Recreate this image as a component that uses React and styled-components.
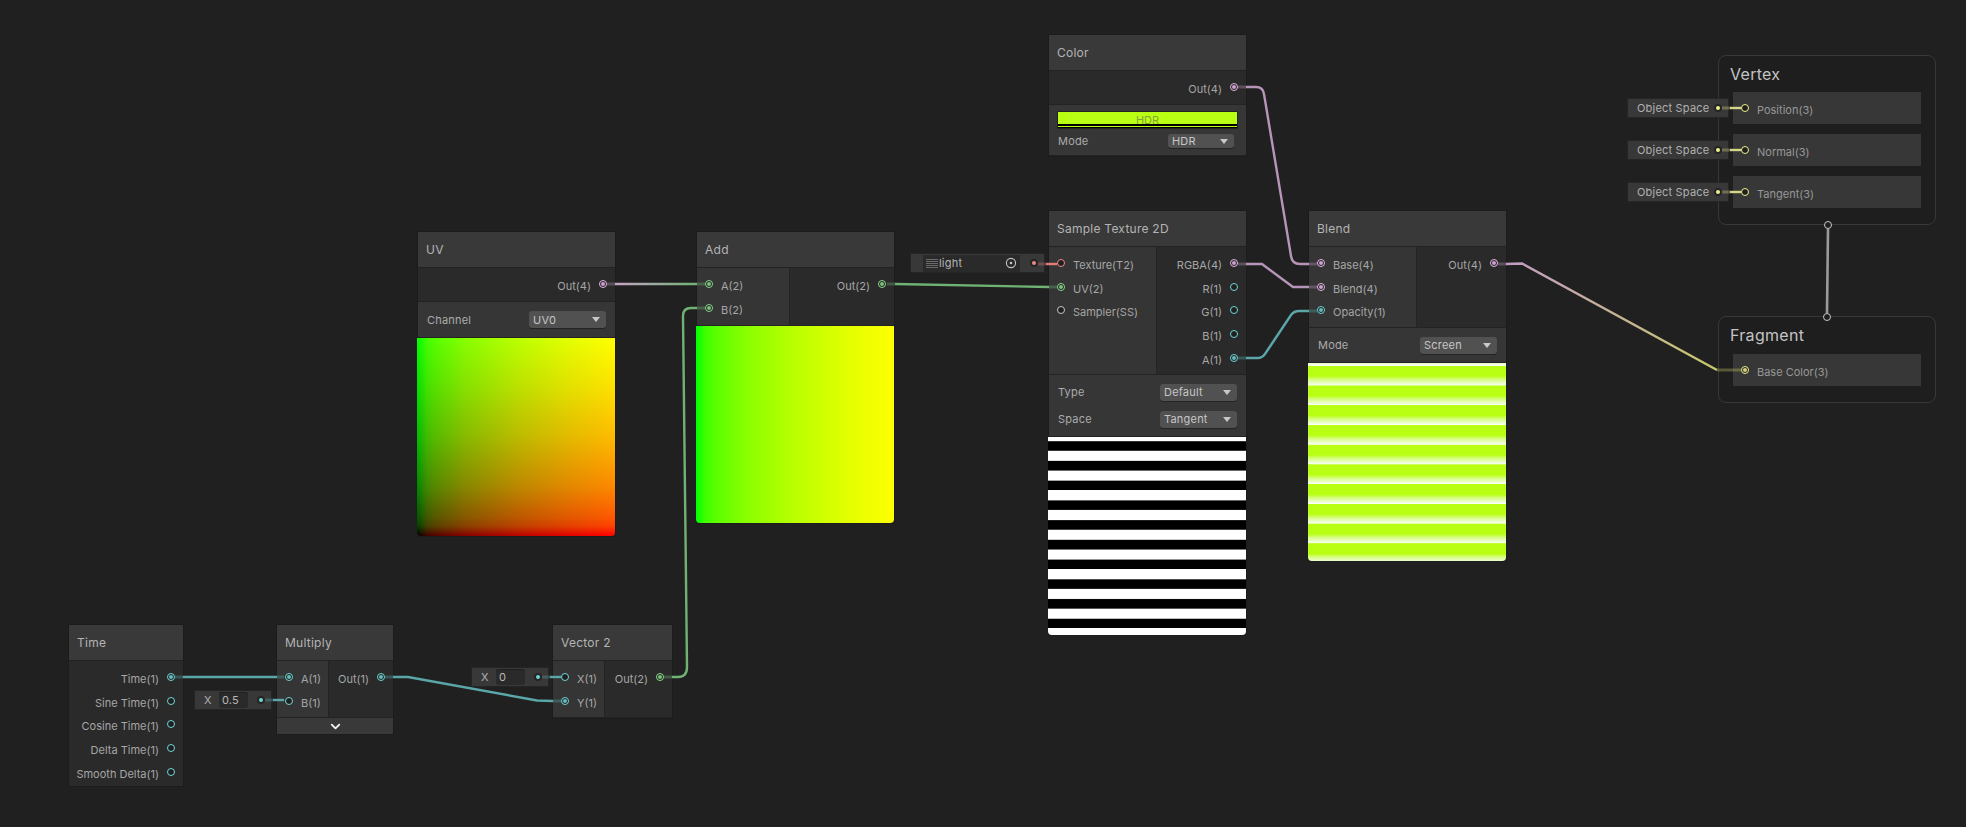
import React from 'react';
import styled, { createGlobalStyle } from 'styled-components';
import { ChevronDown } from 'lucide-react';

const PINK = '#eab9ea';
const GREEN = '#8fdc8f';
const TEAL = '#72d6d6';
const YELLOW = '#f2f28c';
const RED = '#f08585';
const GRAY = '#c8c8c8';

const GlobalStyle = createGlobalStyle`
  html, body {
    margin: 0;
    padding: 0;
    background: #202020;
  }
  body {
    font-family: Inter, "Liberation Sans", sans-serif;
    overflow: hidden;
  }
`;

const Canvas = styled.div`
  position: relative;
  width: 1966px;
  height: 827px;
  background: #202020;
  overflow: hidden;
`;

const Node = styled.div`
  position: absolute;
  left: ${(p) => p.$x}px;
  top: ${(p) => p.$y}px;
  width: ${(p) => p.$w}px;
  background: #2a2a2a;
  box-shadow: 0 0 0 1px #1c1c1c;
  display: flex;
  flex-direction: column;
`;

const Title = styled.div`
  height: 35px;
  line-height: 35px;
  padding-left: 8px;
  background: #393939;
  color: #b4b4b4;
  font-size: 12px;
  letter-spacing: 0.25px;
  border-bottom: 1px solid #232323;
`;

const Ports = styled.div`
  display: flex;
  height: ${(p) => p.$h}px;
  border-bottom: 1px solid #232323;
`;

const Inputs = styled.div`
  width: ${(p) => p.$w}px;
  flex: none;
  box-sizing: border-box;
  padding: 4px 0 0 8px;
  background: #353535;
  border-right: 1px solid #242424;
`;

const Outputs = styled.div`
  flex: 1;
  display: flex;
  flex-direction: column;
  align-items: flex-end;
  padding: 4px 8px 0 0;
`;

const PortRow = styled.div`
  display: flex;
  align-items: center;
  gap: 8px;
  height: 23.7px;
`;

const Label = styled.span`
  color: #a6a6a6;
  font-size: 11px;
  line-height: 14px;
  padding-top: 4px;
  white-space: nowrap;
`;

const Port = styled.span`
  position: relative;
  flex: none;
  box-sizing: border-box;
  width: 8px;
  height: 8px;
  border-radius: 50%;
  border: 1.3px solid ${(p) => p.$c};
  background: #1f1f1f;

  &::after {
    content: '';
    display: ${(p) => (p.$on ? 'block' : 'none')};
    position: absolute;
    inset: 1px;
    border-radius: 50%;
    background: ${(p) => p.$c};
    opacity: 0.85;
  }
`;

const Controls = styled.div`
  display: flex;
  flex-direction: column;
  justify-content: ${(p) => (p.$top ? 'flex-start' : 'center')};
  height: ${(p) => p.$h}px;
  box-sizing: border-box;
  padding: ${(p) => (p.$top ? '7px 9px 0' : '0 9px')};
  background: #363636;
  border-bottom: 1px solid #232323;
`;

const ControlRow = styled.div`
  display: flex;
  align-items: center;
  justify-content: space-between;
  height: ${(p) => p.$h || 27}px;
`;

const ControlLabel = styled.span`
  color: #ababab;
  font-size: 11px;
  letter-spacing: 0.2px;
`;

const Select = styled.div`
  box-sizing: border-box;
  width: ${(p) => p.$w || 77}px;
  height: ${(p) => p.$h || 17}px;
  padding: 0 4px;
  margin-right: ${(p) => p.$mr || 0}px;
  display: flex;
  align-items: center;
  justify-content: space-between;
  background: #515151;
  border-radius: 3px;
  box-shadow: 0 1px 0 #242424;
  color: #c6c6c6;
  font-size: 11px;
  letter-spacing: 0.2px;
`;

const Arrow = styled.i`
  width: 0;
  height: 0;
  margin-right: 2px;
  border-left: 4px solid transparent;
  border-right: 4px solid transparent;
  border-top: 5px solid #c8c8c8;
`;

const Swatch = styled.div`
  height: 16px;
  background: linear-gradient(to bottom, #b9ff14 0 12px, #000 12px 14.5px, #b9ff14 14.5px 15.5px, #000 15.5px);
  box-shadow: 0 0 0 0.5px #111;
  color: #86a33a;
  font-size: 11px;
  line-height: 16px;
  text-align: center;
  overflow: hidden;
`;

const Preview = styled.div`
  height: ${(p) => p.$h || 198}px;
  margin-left: -1px;
  border-radius: 0 0 4px 4px;
  background: ${(p) => p.$bg};
  background-blend-mode: ${(p) => p.$blend || 'normal'};
`;

const Expander = styled.div`
  height: 16px;
  display: flex;
  align-items: center;
  justify-content: center;
  background: #393939;
  color: #f0f0f0;
`;

const Block = styled.div`
  position: absolute;
  left: ${(p) => p.$x}px;
  top: ${(p) => p.$y}px;
  box-sizing: border-box;
  width: 218px;
  height: ${(p) => p.$h}px;
  padding: 0 14px;
  background: #1e1e1e;
  border: 1px solid #383838;
  border-radius: 8px;
  display: flex;
  flex-direction: column;
`;

const BlockTitle = styled.div`
  height: ${(p) => p.$h || 36}px;
  line-height: 36px;
  margin-left: -3px;
  color: #c4c4c4;
  font-size: 16px;
  letter-spacing: 0.3px;
`;

const BlockSlots = styled.div`
  display: flex;
  flex-direction: column;
  gap: 10.2px;
`;

const Slot = styled.div`
  height: 32px;
  display: flex;
  align-items: center;
  gap: 8px;
  padding-left: 8px;
  background: #373737;
`;

const SlotLabel = styled(Label)`
  color: #979797;
`;

const FlowPort = styled(Port)`
  position: absolute;
  left: ${(p) => p.$x}px;
  top: ${(p) => p.$y}px;
  border-width: 1.2px;
`;

const Chip = styled.div`
  position: absolute;
  left: ${(p) => p.$x}px;
  top: ${(p) => p.$y}px;
  width: ${(p) => p.$w}px;
  height: 18px;
  box-sizing: border-box;
  padding: 0 6px 0 9px;
  display: flex;
  align-items: center;
  background: #383838;
  box-shadow: 0 0 0 1px #252525;
  color: #b0b0b0;
  font-size: 11px;
  letter-spacing: 0.2px;
`;

const ChipDot = styled.span`
  position: absolute;
  right: ${(p) => p.$r}px;
  top: 5px;
  width: 4px;
  height: 4px;
  border: 2px solid #252525;
  border-radius: 50%;
  background: ${(p) => p.$c};
  box-sizing: content-box;
`;

const FieldName = styled.span`
  width: 15px;
  flex: none;
`;

const FieldInput = styled.span`
  width: 29px;
  height: 16px;
  box-sizing: border-box;
  padding-left: 3px;
  line-height: 16px;
  background: #2a2a2a;
  border-radius: 3px;
  box-shadow: inset 0 1px 0 #212121;
  color: #b8b8b8;
`;

const TextureChip = styled(Chip)`
  padding: 0;
  justify-content: flex-start;
`;

const TextureField = styled.div`
  margin-left: 12px;
  width: 97px;
  height: 17px;
  display: flex;
  align-items: center;
  gap: 1px;
  padding-left: 3px;
  box-sizing: border-box;
  background: #2a2a2a;
  color: #b4b4b4;
`;

const Target = styled.svg`
  margin-left: auto;
  margin-right: 3px;
`;

const WireLayer = styled.svg`
  position: absolute;
  inset: 0;
  pointer-events: none;
`;

const STRIPES =
  'repeating-linear-gradient(to bottom, #fff -5.8px, #fff 3.6px, #999 4.1px, #000 4.7px, #000 13.2px, #888 13.93px)';
const BLEND_STRIPES =
  'repeating-linear-gradient(to bottom, #b9ff14 3px, #b9ff14 13px, #d6fd80 16.5px, #f2fde8 21.5px, #fff 22.2px, #b9ff14 22.73px)';
const GAMMA = (r, g, b) =>
  [0, 0.05, 0.1, 0.25, 0.5, 0.75, 1]
    .map((t) => {
      const v = Math.round(255 * Math.pow(t, 1 / 2.2));
      return `rgb(${r * v},${g * v},${b * v}) ${t * 100}%`;
    })
    .join(', ');
const UV_BG = `linear-gradient(to right, ${GAMMA(1, 0, 0)}), linear-gradient(to top, ${GAMMA(0, 1, 0)})`;
const ADD_BG = `linear-gradient(to right, ${GAMMA(1, 0, 0)}), linear-gradient(#0f0, #0f0)`;

const WP = '#b795b9';
const WG = '#70b273';
const WT = '#5aa6a8';
const WY = '#d6d68a';
const WR = '#e07c7c';

const wires = [
  { d: 'M1246 87 L1256 87 Q1263 87 1264 94 L1291 256 Q1292 264 1300 264 L1309 264', c: WP },
  { d: 'M1246 264 L1262 264 L1293 287 L1309 287', c: WP },
  { d: 'M1246 358 L1258 358 Q1262 358 1265 354 L1291 315 Q1294 311 1299 311 L1309 311', c: WT },
  { d: 'M1506 264 L1522 263.5 L1717 370', c: 'url(#blendFrag)' },
  { d: 'M615 284 L697 284', c: 'url(#uvAdd)' },
  { d: 'M895 284 L1049 287', c: WG },
  { d: 'M672 677 L678 677 Q687 677 687 667 L683 316 Q683 308 691 308 L697 308', c: WG },
  { d: 'M183 677 L277 677', c: WT },
  { d: 'M393 677 L408 677 L537 700.5 L553 701', c: WT },
  { d: 'M273 700 L284 700', c: WT },
  { d: 'M550 677 L561 677', c: WT },
  { d: 'M1046 264 L1057 264', c: WR },
  { d: 'M1730 108 L1741 108', c: WY },
  { d: 'M1730 150 L1741 150', c: WY },
  { d: 'M1730 192 L1741 192', c: WY },
  { d: 'M1828 229 L1827 313', c: '#9a9a9a', w: 2.6 },
];

// dim stretches of wire between a port and the edge of its node
const stubs = [
  ['M1238 87 L1246 87', WP],
  ['M1238 264 L1246 264', WP],
  ['M1238 358 L1246 358', WT],
  ['M1309 264 L1317 264', WP],
  ['M1309 287 L1317 287', WP],
  ['M1309 311 L1317 311', WT],
  ['M1498 264 L1506 264', WP],
  ['M1717 370 L1741 370', '#c8c86a'],
  ['M607 284 L615 284', WP],
  ['M697 284 L705 284', WG],
  ['M697 308 L705 308', WG],
  ['M887 284 L895 284', WG],
  ['M1049 287 L1057 287', WG],
  ['M664 677 L672 677', WG],
  ['M175 677 L183 677', WT],
  ['M277 677 L284 677', WT],
  ['M385 677 L393 677', WT],
  ['M553 701 L561 701', WT],
  ['M265 700 L273 700', WT],
  ['M542 677 L550 677', WT],
  ['M1038 264 L1046 264', WR],
  ['M1722 108 L1730 108', WY],
  ['M1722 150 L1730 150', WY],
  ['M1722 192 L1730 192', WY],
];

const Row = ({ label, c, on, out }) => (
  <PortRow>
    {out ? (
      <>
        <Label>{label}</Label>
        <Port $c={c} $on={on} />
      </>
    ) : (
      <>
        <Port $c={c} $on={on} />
        <Label>{label}</Label>
      </>
    )}
  </PortRow>
);

const ObjectSpace = ({ y }) => (
  <Chip $x={1628} $y={y} $w={100}>
    Object Space
    <ChipDot $r={6} $c={YELLOW} />
  </Chip>
);

const Wires = () => (
  <WireLayer width="1966" height="827" fill="none">
    <defs>
      <linearGradient id="uvAdd" gradientUnits="userSpaceOnUse" x1="615" y1="284" x2="697" y2="284">
        <stop offset="0" stopColor="#c6a4c6" />
        <stop offset="1" stopColor={WG} />
      </linearGradient>
      <linearGradient id="blendFrag" gradientUnits="userSpaceOnUse" x1="1506" y1="264" x2="1717" y2="370">
        <stop offset="0" stopColor="#c29cc4" />
        <stop offset="1" stopColor="#c8c86a" />
      </linearGradient>
    </defs>
    {stubs.map(([d, c]) => (
      <path key={d} d={d} stroke={c} strokeWidth="3" opacity="0.35" />
    ))}
    {wires.map((w) => (
      <path key={w.d} d={w.d} stroke={w.c} strokeWidth={w.w || 2.4} />
    ))}
  </WireLayer>
);

export default function App() {
  return (
    <Canvas>
      <GlobalStyle />

      <Node $x={1049} $y={35} $w={197}>
        <Title>Color</Title>
        <Ports $h={33}>
          <Outputs>
            <Row out label="Out(4)" c={PINK} on />
          </Outputs>
        </Ports>
        <Controls $h={51} $top>
          <Swatch>HDR</Swatch>
          <ControlRow $h={28}>
            <ControlLabel>Mode</ControlLabel>
            <Select $w={66} $h={14} $mr={3}>
              HDR
              <Arrow />
            </Select>
          </ControlRow>
        </Controls>
      </Node>

      <Node $x={1049} $y={211} $w={197}>
        <Title>Sample Texture 2D</Title>
        <Ports $h={127}>
          <Inputs $w={108}>
            <Row label="Texture(T2)" c={RED} />
            <Row label="UV(2)" c={GREEN} on />
            <Row label="Sampler(SS)" c={GRAY} />
          </Inputs>
          <Outputs>
            <Row out label="RGBA(4)" c={PINK} on />
            <Row out label="R(1)" c={TEAL} />
            <Row out label="G(1)" c={TEAL} />
            <Row out label="B(1)" c={TEAL} />
            <Row out label="A(1)" c={TEAL} on />
          </Outputs>
        </Ports>
        <Controls $h={62}>
          <ControlRow>
            <ControlLabel>Type</ControlLabel>
            <Select>
              Default
              <Arrow />
            </Select>
          </ControlRow>
          <ControlRow>
            <ControlLabel>Space</ControlLabel>
            <Select>
              Tangent
              <Arrow />
            </Select>
          </ControlRow>
        </Controls>
        <Preview $bg={STRIPES} />
      </Node>

      <Node $x={1309} $y={211} $w={197}>
        <Title>Blend</Title>
        <Ports $h={80}>
          <Inputs $w={108}>
            <Row label="Base(4)" c={PINK} on />
            <Row label="Blend(4)" c={PINK} on />
            <Row label="Opacity(1)" c={TEAL} on />
          </Inputs>
          <Outputs>
            <Row out label="Out(4)" c={PINK} on />
          </Outputs>
        </Ports>
        <Controls $h={35}>
          <ControlRow $h={34}>
            <ControlLabel>Mode</ControlLabel>
            <Select>
              Screen
              <Arrow />
            </Select>
          </ControlRow>
        </Controls>
        <Preview $bg={BLEND_STRIPES} />
      </Node>

      <Node $x={418} $y={232} $w={197}>
        <Title>UV</Title>
        <Ports $h={33}>
          <Outputs>
            <Row out label="Out(4)" c={PINK} on />
          </Outputs>
        </Ports>
        <Controls $h={36}>
          <ControlRow $h={35}>
            <ControlLabel>Channel</ControlLabel>
            <Select>
              UV0
              <Arrow />
            </Select>
          </ControlRow>
        </Controls>
        <Preview $bg={UV_BG} $blend="screen" />
      </Node>

      <Node $x={697} $y={232} $w={197}>
        <Title>Add</Title>
        <Ports $h={57}>
          <Inputs $w={93}>
            <Row label="A(2)" c={GREEN} on />
            <Row label="B(2)" c={GREEN} on />
          </Inputs>
          <Outputs>
            <Row out label="Out(2)" c={GREEN} on />
          </Outputs>
        </Ports>
        <Preview $bg={ADD_BG} $blend="screen" $h={197} />
      </Node>

      <Node $x={69} $y={625} $w={114}>
        <Title>Time</Title>
        <Outputs>
          <Row out label="Time(1)" c={TEAL} on />
          <Row out label="Sine Time(1)" c={TEAL} />
          <Row out label="Cosine Time(1)" c={TEAL} />
          <Row out label="Delta Time(1)" c={TEAL} />
          <Row out label="Smooth Delta(1)" c={TEAL} />
          <PortRow style={{ height: 3 }} />
        </Outputs>
      </Node>

      <Node $x={277} $y={625} $w={116}>
        <Title>Multiply</Title>
        <Ports $h={56}>
          <Inputs $w={52}>
            <Row label="A(1)" c={TEAL} on />
            <Row label="B(1)" c={TEAL} />
          </Inputs>
          <Outputs>
            <Row out label="Out(1)" c={TEAL} on />
          </Outputs>
        </Ports>
        <Expander>
          <ChevronDown size={15} strokeWidth={3} />
        </Expander>
      </Node>

      <Node $x={553} $y={625} $w={119}>
        <Title>Vector 2</Title>
        <Ports $h={56}>
          <Inputs $w={52}>
            <Row label="X(1)" c={TEAL} />
            <Row label="Y(1)" c={TEAL} on />
          </Inputs>
          <Outputs>
            <Row out label="Out(2)" c={GREEN} on />
          </Outputs>
        </Ports>
      </Node>

      <Block $x={1718} $y={55} $h={170}>
        <BlockTitle>Vertex</BlockTitle>
        <BlockSlots>
          <Slot>
            <Port $c={YELLOW} />
            <SlotLabel>Position(3)</SlotLabel>
          </Slot>
          <Slot>
            <Port $c={YELLOW} />
            <SlotLabel>Normal(3)</SlotLabel>
          </Slot>
          <Slot>
            <Port $c={YELLOW} />
            <SlotLabel>Tangent(3)</SlotLabel>
          </Slot>
        </BlockSlots>
        <FlowPort $c={GRAY} $x={105} $y={165} />
      </Block>

      <Block $x={1718} $y={316} $h={87}>
        <BlockTitle $h={37}>Fragment</BlockTitle>
        <Slot>
          <Port $c={YELLOW} $on />
          <SlotLabel>Base Color(3)</SlotLabel>
        </Slot>
        <FlowPort $c={GRAY} $x={104} $y={-4} />
      </Block>

      <ObjectSpace y={99} />
      <ObjectSpace y={141} />
      <ObjectSpace y={183} />

      <Chip $x={195} $y={691} $w={76}>
        <FieldName>X</FieldName>
        <FieldInput>0.5</FieldInput>
        <ChipDot $r={6} $c={TEAL} />
      </Chip>
      <Chip $x={472} $y={668} $w={76}>
        <FieldName>X</FieldName>
        <FieldInput>0</FieldInput>
        <ChipDot $r={6} $c={TEAL} />
      </Chip>

      <TextureChip $x={911} $y={254} $w={133}>
        <TextureField>
          <svg width="12" height="10" viewBox="0 0 12 10" stroke="#6a6a6a" strokeWidth="1">
            <path d="M0 1.5H12M0 3.5H12M0 5.5H12M0 7.5H12M0 9.5H12" />
          </svg>
          light
          <Target width="12" height="12" viewBox="0 0 12 12" fill="none">
            <circle cx="6" cy="6" r="4.6" stroke="#c4c4c4" strokeWidth="1.1" />
            <circle cx="6" cy="6" r="1.3" fill="#c4c4c4" />
          </Target>
        </TextureField>
        <ChipDot $r={6} $c={RED} />
      </TextureChip>

      <Wires />
    </Canvas>
  );
}
